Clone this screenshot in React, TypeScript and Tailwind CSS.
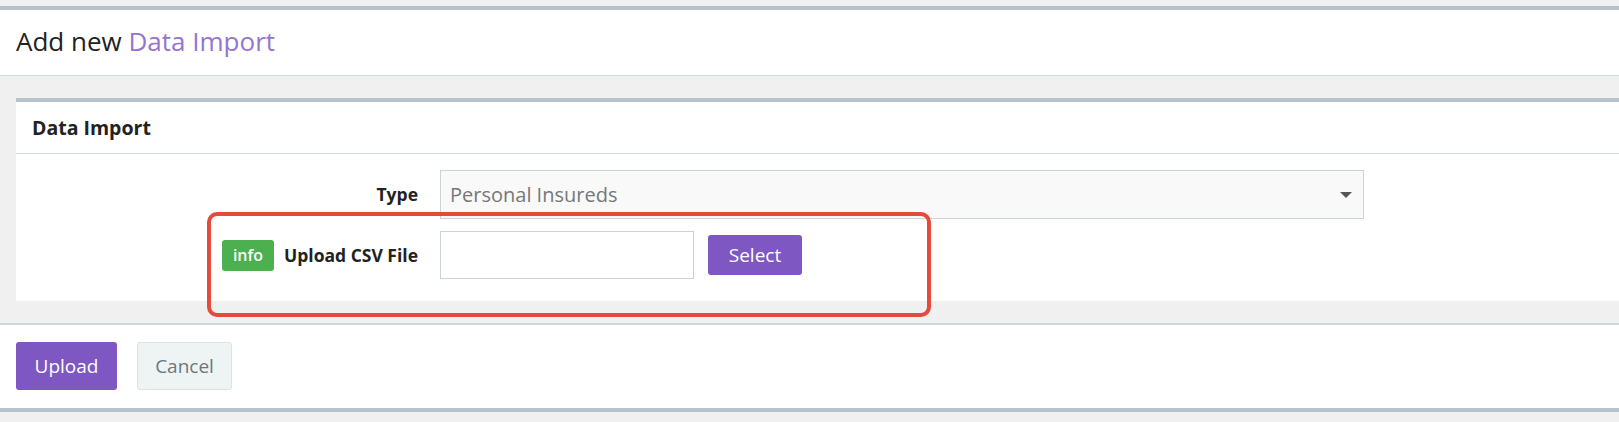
import React from "react";

export default function App() {
  const font = { fontFamily: '"Open Sans", "Noto Sans", Arial, sans-serif' };
  return (
    <div className="relative w-full h-[422px] bg-[#f0f0f0] pt-[6px] overflow-hidden" style={font}>
      {/* Header */}
      <div className="h-[70px] bg-white border-t-4 border-[#b6c3ca] border-b border-b-[#cfd8dc] flex items-center pl-4">
        <h1 className="text-[26px] text-[#222] leading-none -mt-[4px]">
          Add new <span className="text-[#9575cd]">Data Import</span>
        </h1>
      </div>

      {/* Panel */}
      <div className="pl-4 pt-[22px]">
        <div className="bg-white border-t-4 border-[#b6c3ca]">
          <div className="h-[52px] border-b border-[#cfd8dc] flex items-center pl-4">
            <span className="text-[19.5px] font-bold text-[#222] leading-none">Data Import</span>
          </div>
          <div className="pt-4 pb-[22px] flex flex-col gap-3">
            <div className="flex items-center">
              <div className="w-[402px] flex justify-end">
                <span className="text-[17.5px] font-bold text-[#222]">Type</span>
              </div>
              <div className="ml-[22px] w-[924px] h-[49px] border border-[#ccd3d6] bg-[#f9f9f9] flex items-center pl-[9px] pr-[11px] justify-between">
                <span className="text-[20px] text-[#777]">Personal Insureds</span>
                <svg width="12" height="6" viewBox="0 0 12 6">
                  <path d="M0 0 L12 0 L6 6 Z" fill="#555" />
                </svg>
              </div>
            </div>
            <div className="flex items-center">
              <div className="w-[402px] flex justify-end items-center gap-[10px]">
                <span className="h-[31px] w-[52px] justify-center rounded-[3px] bg-[#4caf50] text-white text-[16px] font-semibold flex items-center">
                  info
                </span>
                <span className="text-[17.5px] font-bold text-[#222]">Upload CSV File</span>
              </div>
              <div className="ml-[22px] w-[254px] h-[48px] border border-[#ccd3d6] bg-white" />
              <button className="ml-[14px] w-[94px] h-[40px] rounded-[3px] bg-[#7e57c2] text-white text-[19px]">
                Select
              </button>
            </div>
          </div>
        </div>
      </div>

      {/* Footer */}
      <div className="mt-[22px] bg-white border-t-2 border-[#cdd8db] border-b-4 border-b-[#b6c3ca] h-[89px] flex items-start pt-[17px] pl-4 gap-5">
        <button className="w-[101px] h-[48px] rounded-[3px] bg-[#7e57c2] text-white text-[19px]">
          Upload
        </button>
        <button className="w-[95px] h-[48px] rounded-[3px] bg-[#eef4f4] border border-[#dde3e4] text-[#6b7780] text-[19px]">
          Cancel
        </button>
      </div>

      {/* Annotation */}
      <div className="absolute left-[207px] top-[212px] w-[724px] h-[105px] border-4 border-[#e34c3a] rounded-[10px] pointer-events-none" />
    </div>
  );
}
